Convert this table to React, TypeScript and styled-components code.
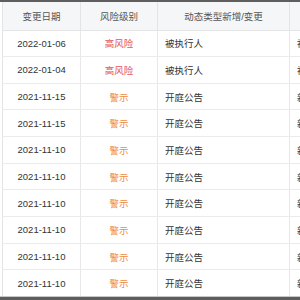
import React from "react";
import styled, { createGlobalStyle } from "styled-components";

const Global = createGlobalStyle`
  html, body { margin: 0; padding: 0; background: #fff; overflow: hidden; }
  body { font-family: "Liberation Sans", Arial, "Noto Sans CJK SC", sans-serif; }
`;

const Frame = styled.div`
  width: 300px;
  height: 300px;
  overflow: hidden;
  display: flex;
  flex-direction: column;
  border-top: 2px solid #5e5e5e;
  box-sizing: border-box;
`;

const TableWrap = styled.div`
  flex: 1;
  padding-left: 2px;
  overflow: hidden;
`;

const Table = styled.table`
  border-collapse: collapse;
  table-layout: fixed;
  width: 360px;
  font-size: 9.5px;
  color: #333;
  border-left: 1px solid #e4e4e4;
`;

const HeadCell = styled.th<{ $w: number }>`
  width: ${(p) => p.$w}px;
  height: 28px;
  padding: 0;
  background: #f5f6f7;
  color: #555;
  font-weight: normal;
  text-align: center;
  border-right: 1px solid #e4e4e4;
  border-bottom: 1px solid #e4e4e4;
  box-sizing: border-box;
`;

const Cell = styled.td<{ $align?: "left" | "center"; $tone?: "high" | "warn" }>`
  height: 26.67px;
  padding: 0 0 0 ${(p) => (p.$align === "left" ? "7px" : "0")};
  text-align: ${(p) => p.$align ?? "center"};
  color: ${(p) =>
    p.$tone === "high" ? "#e45454" : p.$tone === "warn" ? "#f08b3e" : "#333"};
  border-right: 1px solid #e8e8e8;
  border-bottom: 1px solid #ebebeb;
  white-space: nowrap;
  overflow: hidden;
  box-sizing: border-box;
`;

const BottomBar = styled.div`
  height: 3px;
  border-top: 1px solid #c8c8c8;
  background: #5e5e5e;
  flex: none;
`;

type Row = { date: string; risk: string; tone: "high" | "warn"; type: string; change: string };

const rows: Row[] = [
  { date: "2022-01-06", risk: "高风险", tone: "high", type: "被执行人", change: "被执行人" },
  { date: "2022-01-04", risk: "高风险", tone: "high", type: "被执行人", change: "被执行人" },
  { date: "2021-11-15", risk: "警示", tone: "warn", type: "开庭公告", change: "新增" },
  { date: "2021-11-15", risk: "警示", tone: "warn", type: "开庭公告", change: "新增" },
  { date: "2021-11-10", risk: "警示", tone: "warn", type: "开庭公告", change: "新增" },
  { date: "2021-11-10", risk: "警示", tone: "warn", type: "开庭公告", change: "新增" },
  { date: "2021-11-10", risk: "警示", tone: "warn", type: "开庭公告", change: "新增" },
  { date: "2021-11-10", risk: "警示", tone: "warn", type: "开庭公告", change: "新增" },
  { date: "2021-11-10", risk: "警示", tone: "warn", type: "开庭公告", change: "新增" },
  { date: "2021-11-10", risk: "警示", tone: "warn", type: "开庭公告", change: "新增" },
];

export default function App() {
  return (
    <>
      <Global />
      <Frame>
        <TableWrap>
          <Table>
            <thead>
              <tr>
                <HeadCell $w={78}>变更日期</HeadCell>
                <HeadCell $w={77}>风险级别</HeadCell>
                <HeadCell $w={132}>动态类型新增/变更</HeadCell>
                <HeadCell $w={73}>内容</HeadCell>
              </tr>
            </thead>
            <tbody>
              {rows.map((r, i) => (
                <tr key={i}>
                  <Cell>{r.date}</Cell>
                  <Cell $tone={r.tone}>{r.risk}</Cell>
                  <Cell $align="left">{r.type}</Cell>
                  <Cell $align="left">{r.change}</Cell>
                </tr>
              ))}
            </tbody>
          </Table>
        </TableWrap>
        <BottomBar />
      </Frame>
    </>
  );
}
